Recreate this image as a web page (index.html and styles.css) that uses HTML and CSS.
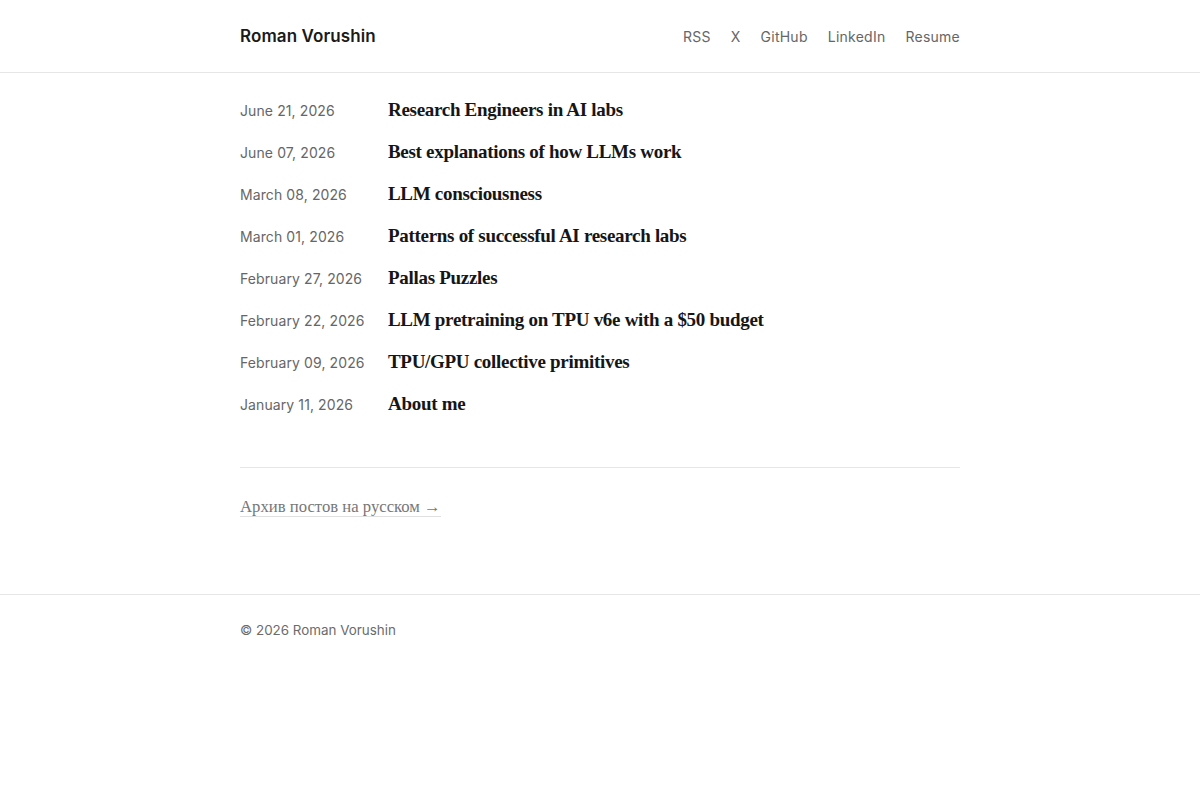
FILE: index.html
```html
<!DOCTYPE html>
<html lang="en">

<head>
    <meta charset="UTF-8">
    <meta name="viewport" content="width=device-width, initial-scale=1.0">
    <title>Roman Vorushin</title>

    <link rel="stylesheet" href="styles.css">
</head>

<body>
    <header class="site-header">
        <div class="wrap header-inner">
            <a class="brand" href="#">Roman Vorushin</a>
            <nav class="nav">
                <a href="#">RSS</a>
                <a href="#">X</a>
                <a href="#">GitHub</a>
                <a href="#">LinkedIn</a>
                <a href="#">Resume</a>
            </nav>
        </div>
    </header>

    <main class="wrap content">
        <ul class="posts">
            <li class="post"><span class="post-date">June 21, 2026</span><a class="post-title" href="#">Research Engineers in AI labs</a></li>
            <li class="post"><span class="post-date">June 07, 2026</span><a class="post-title" href="#">Best explanations of how LLMs work</a></li>
            <li class="post"><span class="post-date">March 08, 2026</span><a class="post-title" href="#">LLM consciousness</a></li>
            <li class="post"><span class="post-date">March 01, 2026</span><a class="post-title" href="#">Patterns of successful AI research labs</a></li>
            <li class="post"><span class="post-date">February 27, 2026</span><a class="post-title" href="#">Pallas Puzzles</a></li>
            <li class="post"><span class="post-date">February 22, 2026</span><a class="post-title" href="#">LLM pretraining on TPU v6e with a $50 budget</a></li>
            <li class="post"><span class="post-date">February 09, 2026</span><a class="post-title" href="#">TPU/GPU collective primitives</a></li>
            <li class="post"><span class="post-date">January 11, 2026</span><a class="post-title" href="#">About me</a></li>
        </ul>

        <div class="archive">
            <a class="archive-link" href="#">Архив постов на русском →</a>
        </div>
    </main>

    <footer class="site-footer">
        <div class="wrap">
            <p class="copy">© 2026 Roman Vorushin</p>
        </div>
    </footer>
</body>

</html>
```

FILE: styles.css
```css
body {
    margin: 0;
    background: #fff;
    color: #111;
    font-family: Inter, "Liberation Sans", sans-serif;
}

a {
    text-decoration: none;
    color: inherit;
}

.wrap {
    width: 720px;
    margin: 0 auto;
}

/* шапка */
.site-header {
    border-bottom: 1px solid #e6e6e6;
}

.header-inner {
    height: 72px;
    display: flex;
    align-items: center;
    justify-content: space-between;
}

.brand {
    font-size: 17px;
    font-weight: 600;
    letter-spacing: 0.1px;
    color: #1a1a1a;
}

.nav {
    display: flex;
    gap: 20px;
    font-size: 14px;
    letter-spacing: 0.25px;
    color: #666;
}

/* список постов */
.content {
    padding-top: 22px;
}

.posts {
    list-style: none;
    margin: 0;
    padding: 0;
    display: flex;
    flex-direction: column;
    gap: 11px;
}

.post {
    display: flex;
    align-items: baseline;
    line-height: 30px;
}

.post-date {
    width: 148px;
    flex-shrink: 0;
    font-size: 14px;
    letter-spacing: 0.1px;
    color: #666;
}

.post-title {
    font-family: "Liberation Serif", "Times New Roman", serif;
    font-weight: 700;
    font-size: 19px;
    letter-spacing: -0.3px;
    color: #161616;
}

.archive {
    margin-top: 47px;
    border-top: 1px solid #e6e6e6;
    padding: 28px 0 77px;
}

.archive-link {
    font-family: "Liberation Serif", "Times New Roman", serif;
    font-size: 16.7px;
    color: #777;
    border-bottom: 1px solid #e0e0e0;
}

/* подвал */
.site-footer {
    border-top: 1px solid #e6e6e6;
}

.copy {
    margin: 0;
    padding-top: 27px;
    font-size: 13.4px;
    color: #6b6b6b;
}
```
